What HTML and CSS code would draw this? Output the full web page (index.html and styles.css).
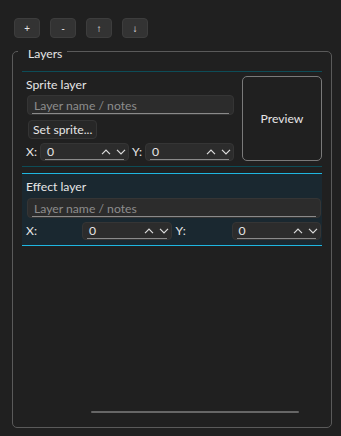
FILE: index.html
```html
<!DOCTYPE html>
<html>
    <head>
      <meta charset="utf-8">
      <title>Layers</title>
      <link rel="stylesheet" href="styles.css">
    </head>

    <body>
        <div class="toolbar">
            <button class="tool_btn">+</button>
            <button class="tool_btn">-</button>
            <button class="tool_btn">↑</button>
            <button class="tool_btn">↓</button>
        </div>

        <div class="group">
            <div class="group_title">Layers</div>
            <div class="layer_list">
                <!-- 精灵层 -->
                <div class="layer_item">
                    <div class="layer_main">
                        <div class="layer_name">Sprite layer</div>
                        <div class="text_box">Layer name / notes</div>
                        <button class="sprite_btn">Set sprite...</button>
                        <div class="pos_row">
                            <span class="pos_label">X:</span>
                            <div class="num_box">
                                <span class="num_val">0</span>
                                <span class="spin">
                                    <svg width="10" height="6" viewBox="0 0 10 6"><polyline points="1,5.2 5,1.2 9,5.2"/></svg>
                                    <svg width="10" height="6" viewBox="0 0 10 6"><polyline points="1,0.8 5,4.8 9,0.8"/></svg>
                                </span>
                            </div>
                            <span class="pos_label">Y:</span>
                            <div class="num_box">
                                <span class="num_val">0</span>
                                <span class="spin">
                                    <svg width="10" height="6" viewBox="0 0 10 6"><polyline points="1,5.2 5,1.2 9,5.2"/></svg>
                                    <svg width="10" height="6" viewBox="0 0 10 6"><polyline points="1,0.8 5,4.8 9,0.8"/></svg>
                                </span>
                            </div>
                        </div>
                    </div>
                    <div class="preview">Preview</div>
                </div>

                <!-- 特效层（选中） -->
                <div class="layer_item layer_selected">
                    <div class="layer_main">
                        <div class="layer_name">Effect layer</div>
                        <div class="text_box">Layer name / notes</div>
                        <div class="pos_grid">
                            <span class="pos_label">X:</span>
                            <div class="num_box">
                                <span class="num_val">0</span>
                                <span class="spin">
                                    <svg width="10" height="6" viewBox="0 0 10 6"><polyline points="1,5.2 5,1.2 9,5.2"/></svg>
                                    <svg width="10" height="6" viewBox="0 0 10 6"><polyline points="1,0.8 5,4.8 9,0.8"/></svg>
                                </span>
                            </div>
                            <span class="pos_label">Y:</span>
                            <div class="num_box">
                                <span class="num_val">0</span>
                                <span class="spin">
                                    <svg width="10" height="6" viewBox="0 0 10 6"><polyline points="1,5.2 5,1.2 9,5.2"/></svg>
                                    <svg width="10" height="6" viewBox="0 0 10 6"><polyline points="1,0.8 5,4.8 9,0.8"/></svg>
                                </span>
                            </div>
                        </div>
                    </div>
                </div>
            </div>
            <div class="scroll_bar"></div>
        </div>
    </body>
</html>
```

FILE: styles.css
```css
*{
    box-sizing: border-box;
}
body{
    margin: 0;
    background-color: #202020;
    color: #e6e6e6;
    font-family: "Segoe UI", Lato, "Noto Sans", sans-serif;
    font-size: 12.2px;
}
button{
    font-family: inherit;
    font-size: 12.2px;
    color: #e6e6e6;
    margin: 0;
    padding: 0;
}
.toolbar{
    display: flex;
    gap: 10px;
    padding: 18px 0 0 14px;
}
.tool_btn{
    width: 26px;
    height: 20px;
    line-height: 16px;
    border: 1px solid #3d3d3d;
    border-radius: 4px;
    background-color: #333;
    font-family: "Noto Sans", sans-serif;
    font-size: 10px;
}
.group{
    display: flex;
    flex-direction: column;
    width: 320px;
    height: 377px;
    margin: 13px 0 0 12px;
    border: 1px solid #5a5a5a;
    border-radius: 5px;
}
.group_title{
    align-self: flex-start;
    margin: -6px 0 0 5px;
    padding: 0 5px 0 10px;
    line-height: 16px;
    background-color: #202020;
}
.layer_list{
    margin: 9px 9px 0 9px;
}
.layer_item{
    display: flex;
    gap: 8px;
    padding: 4px 0 5px 4px;
    border-top: 1px solid #0d4c57;
    border-bottom: 1px solid #0d4c57;
}
.layer_main{
    width: 208px;
    padding-top: 1px;
}
.layer_name{
    line-height: 16px;
}
.text_box{
    height: 20px;
    margin: 2px 0 0 1px;
    padding-left: 6px;
    line-height: 19px;
    color: #8c8c8c;
    border: 1px solid #353535;
    border-radius: 4px;
    background: linear-gradient(#8a8a8a, #8a8a8a) center bottom / calc(100% - 8px) 1px no-repeat, #2c2c2c;
}
.sprite_btn{
    height: 19px;
    margin: 5px 0 0 2px;
    padding: 0 4px;
    line-height: 16px;
    border: 1px solid #343434;
    border-radius: 4px;
    background-color: #272727;
}
.pos_row{
    display: flex;
    align-items: center;
    gap: 3px;
    margin-top: 4px;
}
.pos_row .num_box{
    flex: 1;
}
.pos_label{
    line-height: 18px;
}
.num_box{
    display: flex;
    align-items: center;
    justify-content: space-between;
    height: 18px;
    padding: 0 2px 0 6px;
    border: 1px solid #353535;
    border-radius: 4px;
    background: linear-gradient(#8a8a8a, #8a8a8a) center bottom / calc(100% - 8px) 1px no-repeat, #2c2c2c;
}
.num_val{
    line-height: 16px;
}
.spin{
    display: flex;
    gap: 5px;
}
.spin svg{
    display: block;
}
.spin polyline{
    fill: none;
    stroke: #dcdcdc;
    stroke-width: 1.2;
}
.preview{
    width: 80px;
    height: 85px;
    display: flex;
    align-items: center;
    justify-content: center;
    border: 1px solid #7a7a7a;
    border-radius: 5px;
}
.layer_selected{
    margin-top: 6px;
    padding: 4px 1px 5px 4px;
    background-color: #1a2830;
    border-top-color: #1fb6e0;
    border-bottom-color: #1fb6e0;
}
.layer_selected .layer_main{
    width: 100%;
}
.layer_selected .text_box{
    margin-top: 3px;
}
.pos_grid{
    display: grid;
    grid-template-columns: 52px 1fr 52px 1fr;
    gap: 4px;
    margin-top: 4px;
}
.scroll_bar{
    width: 208px;
    height: 2px;
    margin: auto 0 14px 78px;
    border-radius: 1px;
    background-color: #666;
}
```
